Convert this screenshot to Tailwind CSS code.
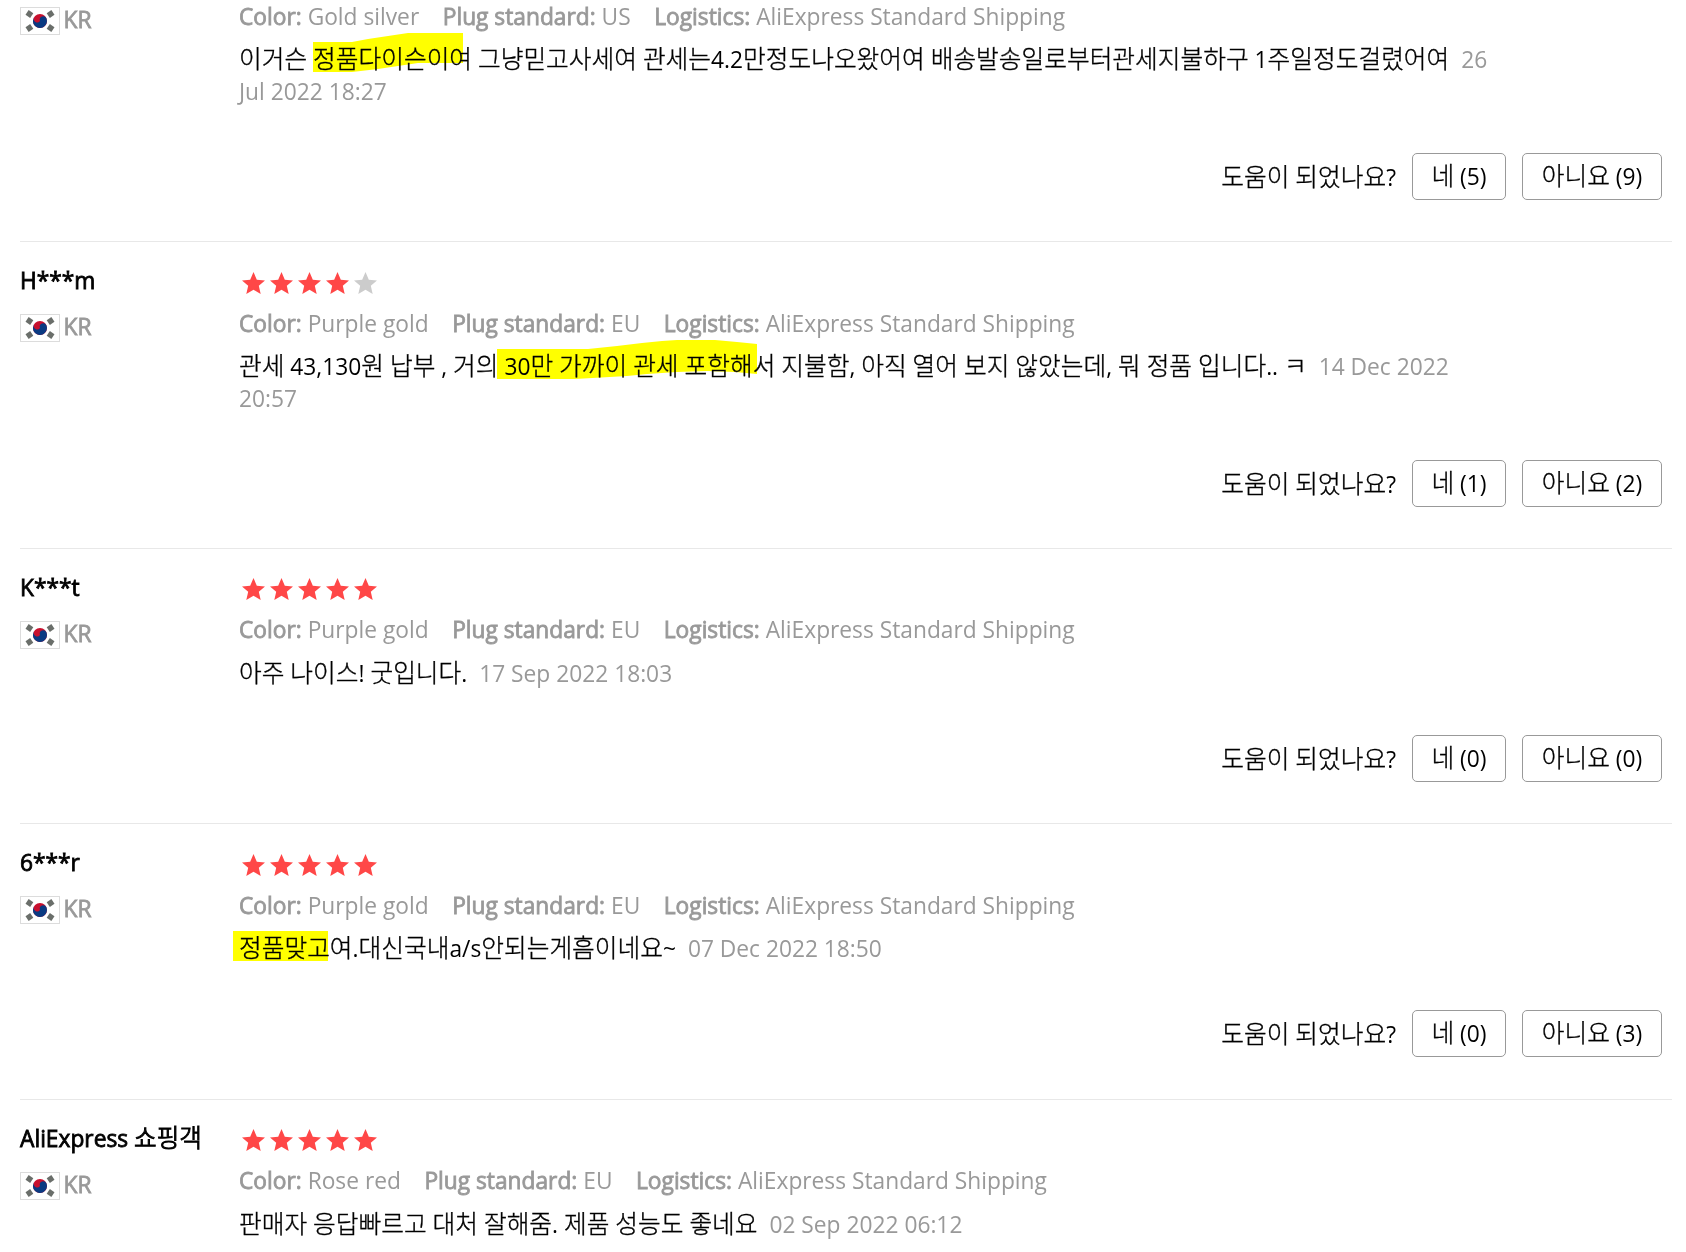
<!doctype html>
<html lang="ko">
  <head>
    <meta charset="UTF-8" />
    <meta name="viewport" content="width=device-width, initial-scale=1.0" />
    <title>Customer Reviews</title>
    <script src="https://cdn.jsdelivr.net/npm/@tailwindcss/browser@4"></script>
  </head>
  <body
    class="bg-white text-black font-['Open_Sans','Noto_Sans_CJK_KR',sans-serif] text-[22.75px] leading-8 h-[1252px] overflow-hidden"
  >
    <svg class="hidden">
      <symbol id="star" viewBox="0 0 23 22">
        <path
          d="M11.5 0 14.8 7.7 23 8.4 16.8 13.8 18.7 22 11.5 17.7 4.3 22 6.2 13.8 0 8.4 8.2 7.7z"
        />
      </symbol>
      <symbol id="flag-kr" viewBox="0 0 40 28">
        <rect x="0.5" y="0.5" width="39" height="27" fill="#fff" stroke="#dcdcdc" />
        <g fill="#6a6e6a">
          <rect x="6.6" y="4.2" width="5.6" height="5.6" transform="rotate(-56 9.4 7)" />
          <rect x="27.8" y="4.2" width="5.6" height="5.6" transform="rotate(56 30.6 7)" />
          <rect x="6.6" y="18.2" width="5.6" height="5.6" transform="rotate(56 9.4 21)" />
          <rect x="27.8" y="18.2" width="5.6" height="5.6" transform="rotate(-56 30.6 21)" />
        </g>
        <circle cx="20" cy="14" r="7" fill="#c8102e" />
        <path
          d="M14 10.5A3.5 3.5 0 0 0 20 14a3.5 3.5 0 0 1 6.4-2.8A7 7 0 1 1 13.6 11z"
          fill="#0a3a82"
        />
      </symbol>
    </svg>

    <main id="reviews" class="ml-5 w-[1652px] -mt-[66px]"></main>

    <script>
      const reviews = [
        {
          user: "",
          stars: 5,
          color: "Gold silver",
          plug: "US",
          text: "이거슨 정품다이슨이여 그냥믿고사세여 관세는4.2만정도나오왔어여 배송발송일로부터관세지불하구 1주일정도걸렸어여",
          date: "26 Jul 2022 18:27",
          votes: [5, 9],
          marker: {
            left: 74,
            width: 150,
            points: "0,9 39,9 55,6 75,3 95,0 150,0 150,30 105,30 85,33 65,36 39,39 0,39",
          },
        },
        {
          user: "H***m",
          stars: 4,
          color: "Purple gold",
          plug: "EU",
          text: "관세 43,130원 납부 , 거의 30만 가까이 관세 포함해서 지불함, 아직 열어 보지 않았는데, 뭐 정품 입니다.. ㅋ",
          date: "14 Dec 2022 20:57",
          votes: [1, 2],
          marker: {
            left: 258,
            width: 260,
            points:
              "0,9 91,9 120,6 145,3 165,1 180,0 218,0 240,2 260,4 260,34 238,32 210,31 180,32 150,34 130,36 78,39 0,39",
          },
        },
        {
          user: "K***t",
          stars: 5,
          color: "Purple gold",
          plug: "EU",
          text: "아주 나이스! 굿입니다.",
          date: "17 Sep 2022 18:03",
          votes: [0, 0],
          tight: true,
        },
        {
          user: "6***r",
          stars: 5,
          color: "Purple gold",
          plug: "EU",
          text: "정품맞고여.대신국내a/s안되는게흠이네요~",
          date: "07 Dec 2022 18:50",
          votes: [0, 3],
          marker: { left: -6, width: 95, points: "0,9 95,9 95,39 0,39" },
        },
        {
          user: "AliExpress 쇼핑객",
          stars: 5,
          color: "Rose red",
          plug: "EU",
          text: "판매자 응답빠르고 대처 잘해줌. 제품 성능도 좋네요",
          date: "02 Sep 2022 06:12",
          tight: true,
        },
      ];

      // Hangul is set slightly larger than the Latin text around it
      const ko = (text) =>
        text.replace(
          /[\u3131-\u318e\uac00-\ud7a3]+/g,
          '<span class="text-[24.7px] leading-none font-light [-webkit-text-stroke:0.35px_#000]">$&</span>',
        );

      const koBold = (text) =>
        text.replace(
          /[\uac00-\ud7a3]+/g,
          '<span class="text-[24.6px] leading-none font-light [-webkit-text-stroke:1px_#000]">$&</span>',
        );

      const label = (text) =>
        `<span class="[-webkit-text-stroke:0.8px_#999]">${text}</span>`;

      const starRow = (count) =>
        [1, 2, 3, 4, 5]
          .map(
            (n) =>
              `<svg class="w-[23px] h-[22px] ${n <= count ? "fill-[#ff4747]" : "fill-[#ccc]"}"><use href="#star" /></svg>`,
          )
          .join("");

      const markerSvg = (m) =>
        m
          ? `<svg class="absolute -top-[11px] h-[39px] mix-blend-multiply fill-[#ff0]" style="left: ${m.left}px; width: ${m.width}px"><polygon points="${m.points}" /></svg>`
          : "";

      const voteRow = (votes) =>
        votes
          ? `<div class="flex justify-end items-center gap-4 mt-[45px] pr-2.5">
              <span class="pt-0.5">${ko("도움이 되었나요?")}</span>
              <button class="h-[47px] w-[94px] border border-[#999] rounded-[5px]">${ko("네")} (${votes[0]})</button>
              <button class="h-[47px] w-[140px] border border-[#999] rounded-[5px]">${ko("아니요")} (${votes[1]})</button>
            </div>`
          : "";

      document.getElementById("reviews").innerHTML = reviews
        .map(
          (r) => `
        <article class="flex border-t border-[#e8e8e8] pb-[41px] nth-4:pb-[42px] last:pb-0">
          <div class="w-[219px] shrink-0 pt-[23px]">
            <div class="min-h-8 [-webkit-text-stroke:0.8px_#000] whitespace-nowrap">${koBold(r.user)}</div>
            <div class="flex mt-[17px] gap-[3.5px] text-[#999]">
              <svg class="w-10 h-7"><use href="#flag-kr" /></svg>
              <span class="leading-[26px] [-webkit-text-stroke:0.8px_#999]">KR</span>
            </div>
          </div>
          <div class="grow ${r.tight ? "pt-[29px]" : "pt-[30px]"}">
            <div class="flex gap-[5px] pl-[2.5px]">${starRow(r.stars)}</div>
            <div class="flex gap-[23.5px] mt-[14px] text-[#999]">
              <span>${label("Color:")} ${r.color}</span>
              <span>${label("Plug standard:")} ${r.plug}</span>
              <span>${label("Logistics:")} AliExpress Standard Shipping</span>
            </div>
            <p class="relative w-[1262px] ${r.tight ? "mt-[12px]" : "mt-[11px]"}">
              <span>${ko(r.text)}</span>
              <span class="ml-[6px] text-[#999]">${r.date}</span>
              ${markerSvg(r.marker)}
            </p>
            ${voteRow(r.votes)}
          </div>
        </article>`,
        )
        .join("");
    </script>
  </body>
</html>
